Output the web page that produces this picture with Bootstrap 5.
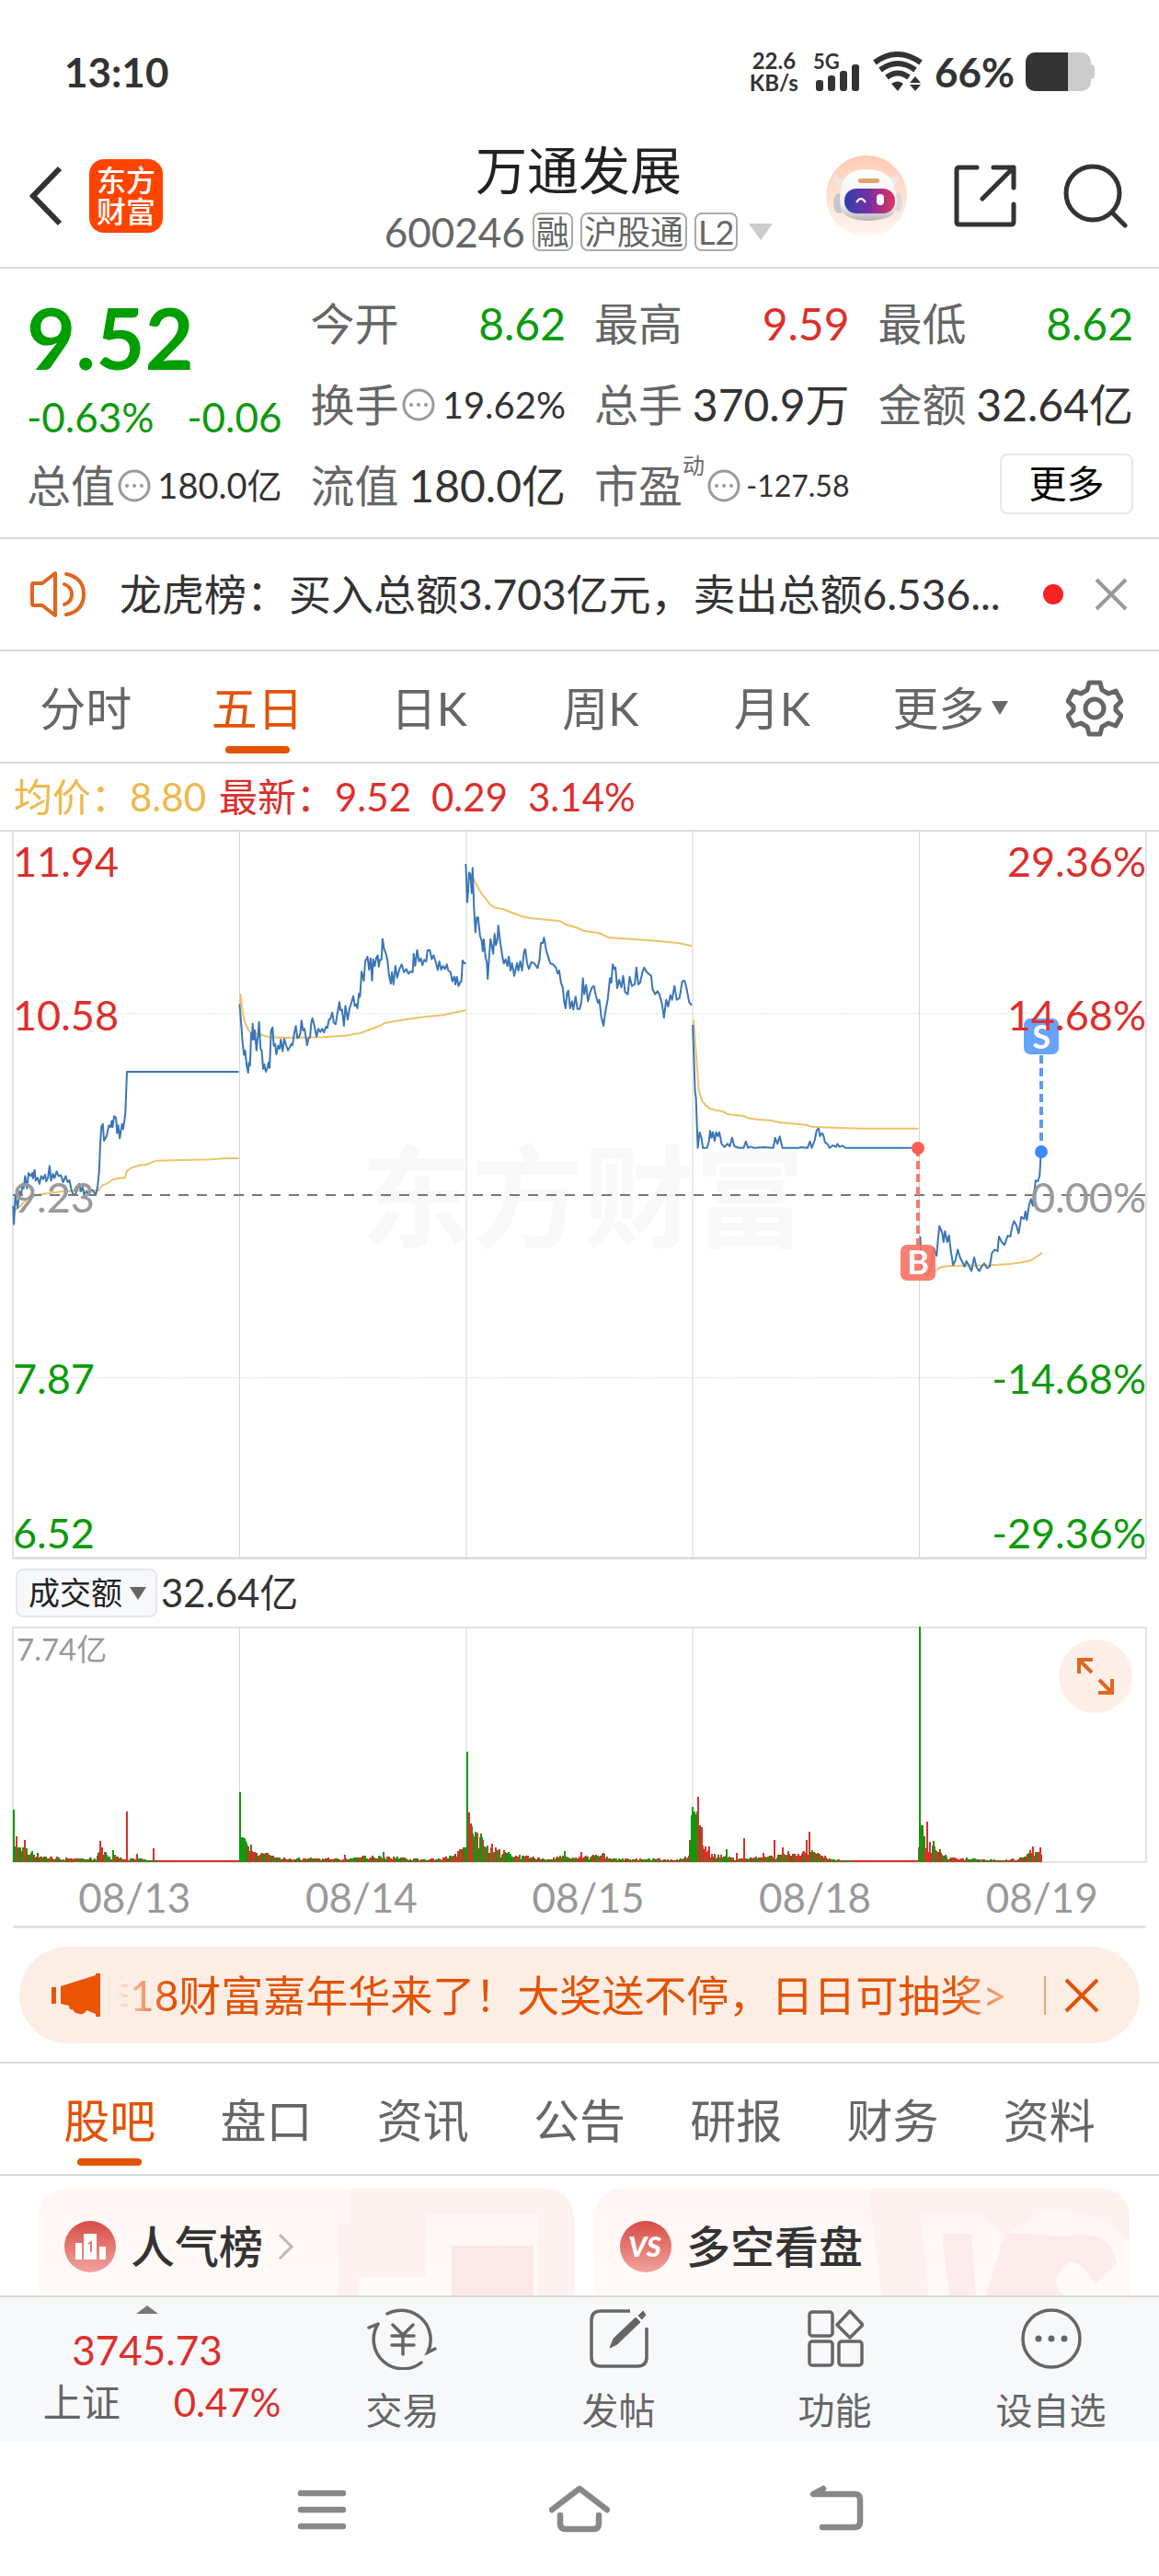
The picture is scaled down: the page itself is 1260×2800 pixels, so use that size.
<!DOCTYPE html>
<html lang="zh-CN">
<head>
<meta charset="utf-8">
<meta name="viewport" content="width=device-width, initial-scale=1">
<title>万通发展 600246</title>
<link rel="stylesheet" href="https://cdn.jsdelivr.net/npm/bootstrap@5.3.0/dist/css/bootstrap.min.css">
<style>
:root{--up:#dc2f2c;--down:#0d9a0d;--accent:#e35205;--ink:#333;--soft:#666;--line:#d9d9d9}
body{font-family:Lato,"Noto Sans CJK SC",sans-serif;color:var(--ink);background:#fff;line-height:1.2}
button,select{font-family:inherit}
svg{display:block;flex:none}
.up{color:var(--up)}.down{color:var(--down)}.soft{color:var(--soft)}
.plain{background:none;border:0;padding:0;color:inherit}
a{color:inherit;text-decoration:none}
.rule-b{border-bottom:2px solid var(--line)}
.status{padding:54px 70px 48px;min-height:150px}
.status-icons{gap:12px}
.clock{font-size:44px;font-weight:700}
.rate{font-size:24px;line-height:24px;font-weight:700;margin-right:4px}
.net{font-size:22px;line-height:22px;font-weight:700;height:44px;width:52px}
.net svg{position:absolute;left:0;bottom:0}
.head{min-height:141px;padding:0 34px 14px 32px}
.side{flex:1 1 0}
.brand-tile{width:80px;height:80px;margin-left:29px;border-radius:16px;background:#ff4400;color:#fff;font-size:32px;line-height:34px;font-weight:500}
.head-tools{gap:51px}
.stock-name{font-size:56px;line-height:70px;margin:0 0 8px;font-weight:400;color:#222}
.stock-code{font-size:44px;line-height:48px}
.tag{font-size:36px;line-height:38px;border:2px solid #aaa;border-radius:8px;padding:0 2px}
.quote{display:grid;grid-template-columns:repeat(4,1fr);grid-auto-rows:88px;column-gap:31px;padding:16px 28px 12px 29px}
.quote-main{grid-row:span 2;padding-top:9px}
.price{font-size:92px;line-height:100px;font-weight:700;color:#009f00}
.t48{font-size:48px}.t44{font-size:44px}.t40{font-size:40px}.t38{font-size:38px}.t32{font-size:32px}
.change{padding-top:10px}
.info{margin-left:3px}
.dyn{font-size:24px;align-self:flex-start;margin-top:8px}
.more-btn{width:145px;height:66px;border:2px solid #e8e8e8;border-radius:8px;font-size:41px;background:#fff}
.notice{min-height:122px;padding:0 34px 0 32px;font-size:46px}
.notice-text{margin-left:34px}
.notice-x{margin-left:34px}
.tabs{font-size:50px;color:var(--soft)}
.tabs .tab-item{min-height:120px;position:relative;flex:1 1 0;padding-top:3px}
.tabs .on{color:var(--accent)}
.tabs .on::after{content:"";position:absolute;left:50%;bottom:9px;width:70px;height:8px;margin-left:-35px;border-radius:4px;background:var(--accent)}
.k-tabs{padding-right:14px}
.k-tabs .wide{flex-grow:1.08}
.k-tabs .cog{flex-grow:.6}
.legend-row{min-height:72px;padding-left:15px;font-size:42px;gap:22px}
.avg{color:#efb94c;margin-right:-8px}
.chart{width:100%;height:auto}
.vol-head{min-height:73px;padding-left:17px;font-size:42px}
.pick{width:154px;height:53px;border:2px solid #e6e8ec;border-radius:8px;background:#f7f8fa;font-size:34px;padding:0 12px;appearance:none;color:#222}
.pick-arrow{position:absolute;right:12px;top:20px;pointer-events:none}
.expand{position:absolute;right:29px;top:14px;width:80px;height:80px;border-radius:50%;background:#fef0e9}
.dates{min-height:68px;padding:6px 4px 0 23px;font-size:44px;color:#999}
.dates span{flex:1 1 0}
.thick{height:3px;background:#e5e5e5;margin:0 14px}
.promo{margin:20px 21px;height:105px;border-radius:53px;background:#fdeee5;color:var(--accent);font-size:46px;padding:0 44px 0 35px}
.ticker{flex:1 1 0;white-space:nowrap;overflow:hidden;margin-left:17px;-webkit-mask-image:linear-gradient(90deg,transparent,#000 55px,#000 calc(100% - 60px),rgba(0,0,0,.4));mask-image:linear-gradient(90deg,transparent,#000 55px,#000 calc(100% - 60px),rgba(0,0,0,.4))}
.vbar{width:2px;height:42px;background:#eda27b;margin:0 20px 0 40px}
.sec-tabs{padding:0 34px;border-top:2px solid var(--line)}
.boards{padding:14px 32px 0 42px;gap:22px}
.board{flex:1 1 0;height:116px;border-radius:30px 30px 0 0;background:linear-gradient(#fff6f4,#fffaf8);position:relative;overflow:hidden;font-size:48px;font-weight:500;padding:9px 28px 0}
.board .art{position:absolute;right:0;top:0}
.board>*:not(.art){position:relative}
.dock{background:#f7f8fa;border-top:2px solid var(--line);min-height:159px}
.dock .index-box{flex:0 0 320px;padding:9px 0 0}
.dock .act{flex:1 1 0;font-size:40px;line-height:48px;gap:20px;color:var(--soft);padding-top:11px}
.index-box .val{font-size:44px;line-height:54px;margin-top:12px}
.index-box .pair{font-size:42px;line-height:60px;gap:58px}
.sys{min-height:147px;gap:214px}
</style>
</head>
<body>
<header>
  <div class="status d-flex align-items-center justify-content-between">
    <span class="clock lh-1">13:10</span>
    <div class="status-icons d-flex align-items-center">
      <div class="rate text-center">22.6<br>KB/s</div>
      <div class="net position-relative">5G<svg width="52" height="32" viewBox="0 13 52 32" fill="#333"><rect x="3" y="32" width="8" height="12" rx="3"/><rect x="16" y="27" width="8" height="17" rx="3"/><rect x="29" y="22" width="8" height="22" rx="3"/><rect x="42" y="15" width="8" height="29" rx="3"/></svg></div>
      <svg width="56" height="44" viewBox="0 0 56 44"><g fill="none" stroke="#333" stroke-width="6"><path d="M3 12Q27-6 53 12M9 20Q28 6 47 20M16 28Q28 19 40 28"/></g><path fill="#333" d="M21 35q7-5 13 0l-6 8zM41 34l6-7 6 7zM41 36h12l-6 7z"/></svg>
      <span class="clock lh-1">66%</span>
      <svg width="75" height="42" viewBox="0 0 75 42"><rect width="71" height="42" rx="10" fill="#ccc"/><rect x="67" y="13" width="8" height="16" rx="4" fill="#ccc"/><path d="M10 0H46V42H10A10 10 0 0 1 0 32V10A10 10 0 0 1 10 0z" fill="#333"/></svg>
    </div>
  </div>
  <div class="head d-flex align-items-center rule-b">
    <div class="side d-flex align-items-center">
      <a href="#" aria-label="返回"><svg width="36" height="66" viewBox="0 0 36 66" fill="none" stroke="#333" stroke-width="6"><path d="M33 3L4 33l29 30"/></svg></a>
      <a href="#" class="brand-tile text-center d-flex align-items-center justify-content-center">东方<br>财富</a>
    </div>
    <div class="text-center">
      <h1 class="stock-name">万通发展</h1>
      <div class="stock-code soft d-flex align-items-center gap-2">
        <span>600246</span><span class="tag">融</span><span class="tag">沪股通</span><span class="tag">L2</span>
        <svg class="ms-1" width="26" height="18" viewBox="0 0 26 18"><path d="M0 0h26L13 18z" fill="#ccc"/></svg>
      </div>
    </div>
    <div class="side head-tools d-flex align-items-center justify-content-end">
      <a href="#" aria-label="助手"><svg width="88" height="88" viewBox="0 0 88 88"><defs><linearGradient id="halo" x2="0" y2="1"><stop stop-color="#ffcbb3"/><stop offset="1" stop-color="#fff6f2"/></linearGradient><linearGradient id="visor"><stop stop-color="#2b3fae"/><stop offset=".5" stop-color="#7a2fa5"/><stop offset="1" stop-color="#e0355a"/></linearGradient><linearGradient id="shell" x2="0" y2="1"><stop stop-color="#fff"/><stop offset=".7" stop-color="#f0eef0"/><stop offset="1" stop-color="#b9b4ba"/></linearGradient></defs><circle cx="44" cy="44" r="44" fill="url(#halo)"/><path d="M10 18q1 10 12 8l-6 8q-10-4-6-16zM77 16q1 9-10 8l6 9q9-6 4-17z" fill="#eee6e6"/><ellipse cx="14" cy="52" rx="6" ry="11" fill="#c9c5ca"/><ellipse cx="78" cy="51" rx="5" ry="10" fill="#dcd8dc"/><path d="M17 34Q20 15 44 15T74 33Q80 50 74 62 70 70 45 71 22 70 17 60q-4-14 0-26z" fill="url(#shell)"/><rect x="35" y="25" width="23" height="5" rx="2" fill="#dfa56d"/><rect x="20" y="36" width="55" height="27" rx="13" fill="url(#visor)"/><path d="M33 51q5-8 10 0" stroke="#fff" stroke-width="2" fill="none"/><rect x="55" y="42" width="8" height="12" rx="4" fill="#fff"/></svg></a>
      <button class="plain" aria-label="分享"><svg width="68" height="68" viewBox="0 0 68 68" fill="none" stroke="#333" stroke-width="5" stroke-linecap="round" stroke-linejoin="round"><path d="M25 3H6Q3 3 3 6V62Q3 65 6 65H62Q65 65 65 62V43M43 3H65V25M65 3L31 37"/></svg></button>
      <button class="plain" aria-label="搜索"><svg width="70" height="70" viewBox="0 0 70 70" fill="none" stroke="#333" stroke-width="5" stroke-linecap="round"><circle cx="32" cy="32" r="29"/><path d="M54 54l13 13"/></svg></button>
    </div>
  </div>
</header>

<main>
  <section class="quote rule-b">
    <div class="quote-main">
      <div class="price">9.52</div>
      <div class="change t44 down d-flex justify-content-between"><span>-0.63%</span><span>-0.06</span></div>
    </div>
    <div class="d-flex align-items-center justify-content-between t48"><span class="soft">今开</span><span class="down">8.62</span></div>
    <div class="d-flex align-items-center justify-content-between t48"><span class="soft">最高</span><span class="up">9.59</span></div>
    <div class="d-flex align-items-center justify-content-between t48"><span class="soft">最低</span><span class="down">8.62</span></div>
    <div class="d-flex align-items-center justify-content-between t48"><span class="soft d-flex align-items-center">换手<svg class="info" width="36" height="36" viewBox="0 0 36 36"><use href="#dots"/></svg></span><span class="t40">19.62%</span></div>
    <div class="d-flex align-items-center justify-content-between t48"><span class="soft">总手</span><span>370.9万</span></div>
    <div class="d-flex align-items-center justify-content-between t48"><span class="soft">金额</span><span>32.64亿</span></div>
    <div class="d-flex align-items-center justify-content-between t48"><span class="soft d-flex align-items-center">总值<svg class="info" width="36" height="36" viewBox="0 0 36 36"><use href="#dots"/></svg></span><span class="t38">180.0亿</span></div>
    <div class="d-flex align-items-center justify-content-between t48"><span class="soft">流值</span><span>180.0亿</span></div>
    <div class="d-flex align-items-center justify-content-between t48"><span class="soft d-flex align-items-center align-self-stretch">市盈<span class="dyn">动</span><svg class="info" width="36" height="36" viewBox="0 0 36 36"><use href="#dots"/></svg></span><span class="t32">-127.58</span></div>
    <div class="d-flex align-items-center justify-content-end pb-1"><button class="more-btn p-0">更多</button></div>
  </section>

  <section class="notice d-flex align-items-center rule-b">
    <svg width="64" height="52" viewBox="0 0 64 52" fill="none" stroke="#e0661f" stroke-width="4" stroke-linejoin="round" stroke-linecap="round"><path d="M4 14H14L28 3V49L14 38H4Q3 38 3 36V16Q3 14 4 14zM38 15Q46 18 46 26T38 37M40 4Q59 8 59 26T40 48"/></svg>
    <a href="#" class="notice-text flex-fill text-nowrap">龙虎榜：买入总额3.703亿元，卖出总额6.536...</a>
    <svg width="22" height="22" viewBox="0 0 22 22"><circle cx="11" cy="11" r="11" fill="#f52323"/></svg>
    <button class="plain notice-x" aria-label="关闭"><svg width="36" height="36" viewBox="0 0 36 36" stroke="#999" stroke-width="4"><path d="M2 2l32 32M34 2L2 34"/></svg></button>
  </section>

  <nav class="tabs k-tabs d-flex rule-b">
    <button class="plain tab-item">分时</button>
    <button class="plain tab-item on">五日</button>
    <button class="plain tab-item">日K</button>
    <button class="plain tab-item">周K</button>
    <button class="plain tab-item">月K</button>
    <button class="plain tab-item wide d-flex align-items-center justify-content-center">更多<svg class="ms-2" width="18" height="15" viewBox="0 0 18 15"><path d="M0 0h18L9 15z" fill="#666"/></svg></button>
    <button class="plain tab-item cog d-flex align-items-center justify-content-center" aria-label="设置"><svg width="62" height="62" viewBox="0 0 62 62" fill="none" stroke="#666" stroke-width="5" stroke-linejoin="round"><path d="M25 3H37L39 11 46 15 54 12 60 23 54 29V33L60 39 54 50 46 47 39 51 37 59H25L23 51 16 47 8 50 2 39 8 33V29L2 23 8 12 16 15 23 11z"/><circle cx="31" cy="31" r="10"/></svg></button>
  </nav>

  <div class="legend-row d-flex align-items-center">
    <span class="avg">均价：8.80</span><span class="up">最新：9.52</span><span class="up">0.29</span><span class="up">3.14%</span>
  </div>

  <svg class="chart" id="price" viewBox="0 0 1260 793" font-size="45">
    <path d="M0 1H1260" stroke="#d9d9d9" stroke-width="2"/>
    <path d="M14 1V792M1246 1V792" stroke="#e2e2e2" stroke-width="2"/>
    <path d="M260.500 2V792M507 2V792M753 2V792M999.500 2V792" stroke="#d6d6d6" stroke-width="1"/>
    <path d="M14 792H1246" stroke="#d9d9d9" stroke-width="3"/>
    <path d="M14 199.500H1246M14 595.500H1246" stroke="#ccc" stroke-dasharray="1 2"/>
    <text x="392" y="444" font-size="121" font-weight="700" fill="#f8f8f8">东方财富</text>
    <g id="avgLines" fill="none" stroke="#edc368" stroke-width="2"></g>
    <g id="priceLines" fill="none" stroke="#3a76b8" stroke-width="2" stroke-linejoin="round"></g>
    <path d="M14 397H1246" stroke="#777" stroke-width="2" stroke-dasharray="11 9"/>
    <path d="M998 346V452" stroke="#f9796b" stroke-width="4" stroke-dasharray="9 5"/>
    <circle cx="998" cy="346" r="7" fill="#f95f4e"/>
    <path d="M1132 245V346" stroke="#5a9cf0" stroke-width="4" stroke-dasharray="9 5"/>
    <circle cx="1132" cy="350" r="7" fill="#3d8af5"/>
    <g font-size="36" font-weight="700" text-anchor="middle">
      <rect x="979" y="451" width="38" height="39" rx="7" fill="#f9705f" fill-opacity=".9"/><text x="998" y="483" fill="#fff">B</text>
      <rect x="1113" y="205" width="38" height="39" rx="7" fill="#66a3fa"/><text x="1132" y="238" fill="#fff">S</text>
    </g>
    <g fill="#dc2f2c"><text x="14" y="51">11.94</text><text x="14" y="218">10.58</text></g>
    <text x="14" y="416" fill="#999">9.23</text>
    <g fill="#0d9a0d"><text x="14" y="613">7.87</text><text x="14" y="781">6.52</text></g>
    <g text-anchor="end"><g fill="#dc2f2c"><text x="1246" y="51">29.36%</text><text x="1246" y="218">14.68%</text></g><text x="1246" y="416" fill="#999">0.00%</text><g fill="#0d9a0d"><text x="1246" y="613">-14.68%</text><text x="1246" y="781">-29.36%</text></g></g>
  </svg>

  <div class="vol-head d-flex align-items-center">
    <div class="position-relative">
      <select class="pick d-block" aria-label="指标"><option>成交额</option><option>成交量</option></select>
      <svg class="pick-arrow" width="18" height="14" viewBox="0 0 18 14"><path d="M0 0h18L9 14z" fill="#666"/></svg>
    </div>
    <span class="ms-1">32.64亿</span>
  </div>

  <div class="position-relative">
    <svg class="chart" id="volume" viewBox="0 0 1260 257">
      <path d="M14 256V1H1246V256z" fill="none" stroke="#e2e2e2" stroke-width="2"/>
      <path d="M260.500 1V256M507 1V256M753 1V256M999.500 1V256" stroke="#d6d6d6"/>
      <text x="18" y="37" font-size="33" fill="#999">7.74亿</text>
      <g id="bars"></g>
    </svg>
    <button class="plain expand d-flex align-items-center justify-content-center" aria-label="全屏"><svg width="42" height="42" viewBox="0 0 42 42" fill="none" stroke="#e0661f" stroke-width="4"><path d="M3 18V3H18M3 3L17 17M39 24V39H24M39 39L25 25"/></svg></button>
  </div>
  <div class="dates d-flex align-items-center text-center"><span>08/13</span><span>08/14</span><span>08/15</span><span>08/18</span><span>08/19</span></div>
  <div class="thick"></div>

  <div class="promo d-flex align-items-center">
    <svg width="54" height="48" viewBox="0 0 54 48" fill="#e95504"><path d="M0 15h5v18H0zM10 14L48 2V0h5v47h-5v-3L38 40q-2 5-8 4t-7-5q-4 1-4-4l-9-2z"/></svg>
    <a href="#" class="ticker d-flex justify-content-end">季18财富嘉年华来了！大奖送不停，日日可抽奖&gt;</a>
    <span class="vbar"></span>
    <button class="plain" aria-label="关闭"><svg width="38" height="38" viewBox="0 0 38 38" stroke="#e35205" stroke-width="4"><path d="M2 2l34 34M36 2L2 36"/></svg></button>
  </div>

  <nav class="tabs sec-tabs d-flex rule-b">
    <button class="plain tab-item on">股吧</button><button class="plain tab-item">盘口</button><button class="plain tab-item">资讯</button><button class="plain tab-item">公告</button><button class="plain tab-item">研报</button><button class="plain tab-item">财务</button><button class="plain tab-item">资料</button>
  </nav>

  <div class="boards d-flex">
    <a href="#" class="board d-flex align-items-center">
      <svg class="art" width="300" height="116" viewBox="0 0 300 116"><path d="M56 0H300V116H261V28H139V96H66V116H44V37H56z" fill="#fef2f0"/><path d="M167 62h89v54h-89z" fill="#fce8e7"/></svg>
      <svg width="56" height="56" viewBox="0 0 56 56"><defs><linearGradient id="coin" x2="0" y2="1"><stop stop-color="#d94b45"/><stop offset="1" stop-color="#f0a49f"/></linearGradient></defs><circle cx="28" cy="28" r="28" fill="url(#coin)"/><path fill="#fff" d="M12 24h7v18h-7zM21 14h14v28H21zM38 28h7v14h-7z"/><path d="M26 25l3-2v11" stroke="#e27f7a" stroke-width="2" fill="none"/></svg>
      <span class="ms-3">人气榜</span>
      <svg class="ms-3" width="18" height="28" viewBox="0 0 18 28" fill="none" stroke="#bbb" stroke-width="3"><path d="M2 1l13 13L2 27"/></svg>
    </a>
    <a href="#" class="board d-flex align-items-center">
      <svg class="art" width="284" height="116" viewBox="0 0 284 116"><path d="M0 0H284V60Q260 22 190 24L150 50 118 26H56L66 116H14z" fill="#fef2f0"/><path d="M80 49h32l5 67H88zM148 49h24l42 3q50-10 56 30l-24 22q-24-45-42-6 0 14 10 18h-86z" fill="#fceceb"/></svg>
      <svg width="56" height="56" viewBox="0 0 56 56"><circle cx="28" cy="28" r="28" fill="url(#coin)"/><text x="27" y="39" text-anchor="middle" font-size="31" font-weight="900" font-style="italic" fill="#fff">VS</text></svg>
      <span class="ms-3">多空看盘</span>
    </a>
  </div>
</main>

<footer>
  <div class="dock d-flex">
    <a href="#" class="index-box d-flex flex-column align-items-center">
      <svg width="24" height="9" viewBox="0 0 24 9"><path d="M12 0l12 9H0z" fill="#777"/></svg>
      <span class="val up">3745.73</span>
      <span class="pair d-flex ps-4 ms-2"><span class="soft">上证</span><span class="up">0.47%</span></span>
    </a>
    <a href="#" class="act d-flex flex-column align-items-center"><svg width="78" height="68" viewBox="0 0 78 68" fill="none" stroke="#666" stroke-width="3.500" stroke-linecap="round"><path d="M22 7A32 32 0 0 1 66 49l8-4M12 18A32 32 0 0 0 59 60M2 22l10-4"/><path d="M28 19l11 11 11-11M39 30V51M27 31H51M27 41H51"/></svg><span>交易</span></a>
    <a href="#" class="act d-flex flex-column align-items-center"><svg width="64" height="68" viewBox="0 0 64 68" fill="none" stroke="#666" stroke-width="3.500"><path d="M44 4H12Q2 4 2 14V54Q2 64 12 64H52Q62 64 62 54V22"/><path d="M22 44L26 34 50 11 55 16 30 40zM53 9l5-5 3 4-4 5z" fill="#666" stroke-width="1"/></svg><span>发帖</span></a>
    <a href="#" class="act d-flex flex-column align-items-center"><svg width="62" height="68" viewBox="0 0 62 68" fill="none" stroke="#666" stroke-width="3.500" stroke-linejoin="round"><rect x="3" y="5" width="25" height="26" rx="3"/><rect x="3" y="37" width="25" height="26" rx="3"/><rect x="35" y="37" width="25" height="26" rx="3"/><path d="M47 4L61 19 47 33 33 19z"/></svg><span>功能</span></a>
    <a href="#" class="act d-flex flex-column align-items-center"><svg width="68" height="68" viewBox="0 0 68 68"><circle cx="34" cy="34" r="31" fill="none" stroke="#666" stroke-width="3.500"/><g fill="#666"><circle cx="20" cy="34" r="3.500"/><circle cx="34" cy="34" r="3.500"/><circle cx="48" cy="34" r="3.500"/></g></svg><span>设自选</span></a>
  </div>
  <div class="sys d-flex align-items-center justify-content-center">
    <button class="plain" aria-label="菜单"><svg width="66" height="54" viewBox="0 0 66 54" stroke="#888" stroke-width="6.500" stroke-linecap="round"><path d="M10 9H56M10 27H56M10 45H56"/></svg></button>
    <button class="plain" aria-label="主页"><svg width="66" height="54" viewBox="0 0 66 54" fill="none" stroke="#888" stroke-width="6.500" stroke-linecap="round" stroke-linejoin="round"><path d="M3 27L33 4 63 27M12 33V42Q12 48 18 48H48Q54 48 54 42V33"/></svg></button>
    <button class="plain" aria-label="后退"><svg width="66" height="54" viewBox="0 0 66 54" fill="none" stroke="#888" stroke-width="6.500" stroke-linecap="round" stroke-linejoin="round"><path d="M18 4L7 10H52Q58 10 58 16V40Q58 46 52 46H17"/></svg></button>
  </div>
</footer>

<svg width="0" height="0" class="position-absolute"><defs><g id="dots"><circle cx="18" cy="18" r="16" fill="none" stroke="#999" stroke-width="3"/><g fill="#999"><circle cx="10" cy="18" r="2"/><circle cx="18" cy="18" r="2"/><circle cx="26" cy="18" r="2"/></g></g></defs></svg>

<script src="https://cdn.jsdelivr.net/npm/bootstrap@5.3.0/dist/js/bootstrap.bundle.min.js"></script>
<script>
const NS='http://www.w3.org/2000/svg';
// Each session: x origin, x divisor, then its points; y is stored in thirds of a unit above the frame.
const price=[
[0,2.45,'35,1262 37,1322 41,1228 47,1270 52,1215 56,1228 60,1190 63,1205 67,1165 72,1205 76,1155 82,1165 86,1155 88,1172 92,1145 95,1180 100,1170 105,1190 110,1165 115,1175 120,1160 123,1182 128,1170 132,1132 136,1180 141,1158 145,1172 151,1150 156,1165 162,1162 168,1185 175,1165 180,1185 185,1178 190,1210 195,1226 200,1226 205,1210 211,1190 215,1215 220,1200 224,1226 230,1215 234,1222 240,1215 246,1210 255,1226 260,1200 264,1150 267,1060 270,1005 274,995 277,1050 284,1035 290,1000 295,1005 298,985 300,1005 304,970 309,975 312,1025 315,1000 319,1042 325,995 328,1012 332,980 334,960 338,825 636,825'],
[0,2.45,'638,605 642,660 646,730 650,770 653,755 657,805 661,828 663,795 666,805 669,700 671,720 673,668 676,720 679,690 683,755 687,710 690,662 694,750 697,755 701,815 704,800 708,825 713,810 715,795 718,812 722,690 726,680 729,740 733,735 736,768 741,740 745,750 748,720 753,758 757,718 762,738 767,755 772,745 776,735 779,738 783,705 788,676 792,715 796,712 800,700 803,658 807,690 811,685 815,715 818,738 822,715 826,712 829,665 832,650 837,672 843,710 848,685 853,695 858,685 863,697 868,678 872,682 876,655 880,652 885,632 889,665 894,670 898,640 904,598 907,625 911,622 916,675 920,610 926,655 931,618 936,600 941,578 945,610 949,605 952,618 956,570 959,580 963,498 969,528 973,465 979,450 983,492 987,455 991,528 994,458 998,480 1002,455 1006,445 1009,482 1012,460 1016,460 1019,392 1023,425 1028,440 1032,460 1036,510 1041,538 1044,500 1048,540 1053,480 1058,518 1064,490 1070,475 1076,500 1082,490 1088,505 1093,498 1099,500 1102,440 1106,480 1111,428 1116,465 1121,455 1125,478 1130,460 1135,465 1139,428 1145,428 1150,458 1155,445 1160,465 1166,493 1170,465 1175,492 1180,480 1185,490 1190,475 1194,495 1200,500 1205,530 1210,515 1213,540 1217,515 1221,545 1227,530 1229,530 1232,462 1236,470 1241,472'],
[480,2.01,'53,147 56,272 58,240 60,175 63,180 66,242 68,160 71,290 74,370 77,322 80,322 84,380 88,400 90,432 92,392 96,450 99,470 101,522 104,455 107,392 110,415 113,440 116,375 119,412 122,395 124,348 129,410 133,450 136,472 140,458 144,480 147,450 151,495 154,470 159,512 165,470 168,495 172,465 176,495 180,435 183,425 187,470 191,490 196,468 202,470 210,487 214,460 217,405 221,405 224,388 229,430 234,455 238,472 244,475 250,485 254,505 257,495 261,535 265,550 268,595 271,618 274,572 277,560 281,618 285,595 288,622 293,580 297,620 302,620 306,595 309,520 312,572 316,542 320,595 325,565 329,550 333,545 337,575 342,600 345,590 349,645 354,675 358,630 363,590 368,520 371,535 374,475 378,490 380,485 384,552 388,525 393,550 397,512 401,565 407,572 411,515 416,545 422,540 426,485 430,540 434,535 439,500 443,485 447,497 452,505 458,512 461,555 467,572 472,562 476,572 482,605 486,648 491,590 495,612 500,575 504,590 509,545 514,590 520,585 526,530 531,528 535,550 541,598 547,608'],
[480,2.01,'549,672 552,800 554,890 556,910 560,1073 564,1022 568,1040 571,1073 580,1073 584,1055 587,1018 590,1040 593,1022 597,1050 600,1022 604,1035 607,1022 612,1060 618,1070 625,1060 630,1068 635,1040 640,1068 650,1073 660,1073 665,1052 670,1073 676,1069 682,1073 704,1071 725,1073 729,1040 734,1060 739,1036 745,1073 780,1073 785,1071 800,1073 805,1052 809,1073 815,1050 820,1015 824,1010 827,1035 831,1025 834,1030 838,1055 843,1060 848,1073 855,1065 862,1070 865,1060 870,1070 876,1066 883,1073 1042,1073'],
[480,2.01,'1046,1362 1048,1440 1052,1480 1062,1490 1068,1470 1072,1440 1076,1400 1082,1425 1085,1370 1088,1328 1094,1350 1097,1380 1100,1345 1105,1380 1109,1358 1113,1410 1118,1455 1123,1440 1128,1405 1133,1430 1138,1445 1143,1460 1147,1442 1152,1455 1158,1475 1164,1430 1169,1462 1175,1475 1180,1460 1186,1450 1192,1465 1198,1460 1203,1415 1209,1405 1215,1410 1218,1362 1224,1380 1230,1390 1237,1360 1243,1362 1247,1330 1251,1312 1256,1325 1261,1352 1267,1298 1273,1305 1276,1280 1279,1308 1284,1260 1288,1240 1292,1262 1295,1220 1298,1180 1303,1182 1307,1165 1310,1090']];
const avg=[
[0,2.45,'37,1285 45,1270 55,1262 65,1248 80,1232 100,1226 130,1221 160,1216 200,1213 262,1213 272,1195 285,1190 300,1177 315,1172 333,1170 338,1148 350,1138 370,1130 390,1128 415,1115 480,1113 560,1111 600,1107 636,1107'],
[0,2.45,'639,608 641,570 646,630 653,665 660,685 668,698 690,702 715,712 760,714 860,712 920,707 960,699 985,687 1010,676 1025,666 1070,656 1130,646 1180,640 1210,632 1241,624'],
[480,2.01,'70,195 80,225 90,250 98,262 106,280 118,290 135,295 150,304 165,312 180,320 200,325 230,329 260,334 272,345 295,355 310,365 345,373 365,387 400,391 470,398 520,406 547,415'],
[480,2.01,'551,655 554,720 558,800 562,885 566,905 570,922 578,935 586,945 600,950 615,955 625,963 640,966 660,969 670,976 690,980 722,984 735,989 760,993 797,998 810,1004 870,1008 920,1010 1042,1010'],
[480,2.01,'1046,1465 1055,1475 1080,1472 1092,1462 1110,1458 1200,1456 1240,1452 1270,1446 1288,1440 1300,1428 1313,1415']];
function draw(id,sets){
  for(const [x0,k,s] of sets){
    const el=document.createElementNS(NS,'polyline');
    el.setAttribute('points',s.split(' ').map(p=>{const [x,y]=p.split(',');return (x0+x/k).toFixed(1)+','+(y/3-12).toFixed(1)}).join(' '));
    document.getElementById(id).append(el);
  }
}
draw('avgLines',avg);draw('priceLines',price);

let seed=7;const rnd=()=>(seed=(seed*16807)%2147483647)/2147483647;
const R='#dc2f2c',G='#0d9a0d',M='#7a5a14';
function bar(x,h,c,w=2){const r=document.createElementNS(NS,'rect');r.setAttribute('x',x);r.setAttribute('y',256-h);r.setAttribute('width',w);r.setAttribute('height',h);r.setAttribute('fill',c);document.getElementById('bars').append(r)}
// Height envelope of the turnover bars: x,height
const env=[[14,24],[20,18],[28,14],[36,11],[50,6],[75,4],[104,4],[108,22],[112,12],[118,6],[123,10],[130,4],[150,4],[160,2],[259,2],[261,30],[268,22],[275,16],[285,10],[305,4],[380,4],[400,7],[420,6],[460,3],[480,4],[492,8],[505,16],[510,42],[514,30],[522,30],[530,20],[545,12],[570,6],[600,4],[612,8],[620,4],[655,9],[665,4],[735,3],[748,8],[751,58],[758,48],[763,28],[768,12],[780,8],[800,4],[820,5],[850,8],[862,8],[880,12],[892,8],[905,3],[930,1],[997,1],[1000,42],[1004,28],[1012,22],[1020,14],[1030,5],[1050,4],[1090,2],[1110,5],[1122,14],[1132,14]];
for(let i=0;i<env.length-1;i++){
  const [a,ha]=env[i],[b,hb]=env[i+1];
  for(let x=a;x<b;x++){
    const e=ha+(hb-ha)*(x-a)/(b-a);
    const quiet=(x>170&&x<259)||(x>925&&x<997);
    const early=(x>=261&&x<268)||(x>=751&&x<757);
    const t=rnd();
    bar(x,Math.max(2,Math.round(e*(early?.85+.2*t:.35+.8*rnd()))),quiet?R:early?G:t<.36?R:t<.68?M:G);
  }
}
[[14,57,G],[17,28,R],[26,24,R],[108,23,R],[137,55,R],[148,9,R],[166,15,R],[122,13,G],[260,76,G],[374,8,R],[416,11,G],[499,14,R],[507,120,G],[509,54,R],[511,42,R],[516,33,G],[521,27,G],[613,12,G],[631,11,R],[655,10,R],[752,60,G],[758,71,R],[762,38,R],[770,17,R],[789,14,G],[800,10,R],[808,26,R],[829,10,R],[841,24,R],[850,16,R],[856,12,R],[876,24,R],[879,33,R],[999,257,G],[1001,40,G],[1007,44,R],[1015,17,G],[1122,17,R],[1130,16,R]].forEach(b=>bar(...b));
</script>
</body>
</html>
